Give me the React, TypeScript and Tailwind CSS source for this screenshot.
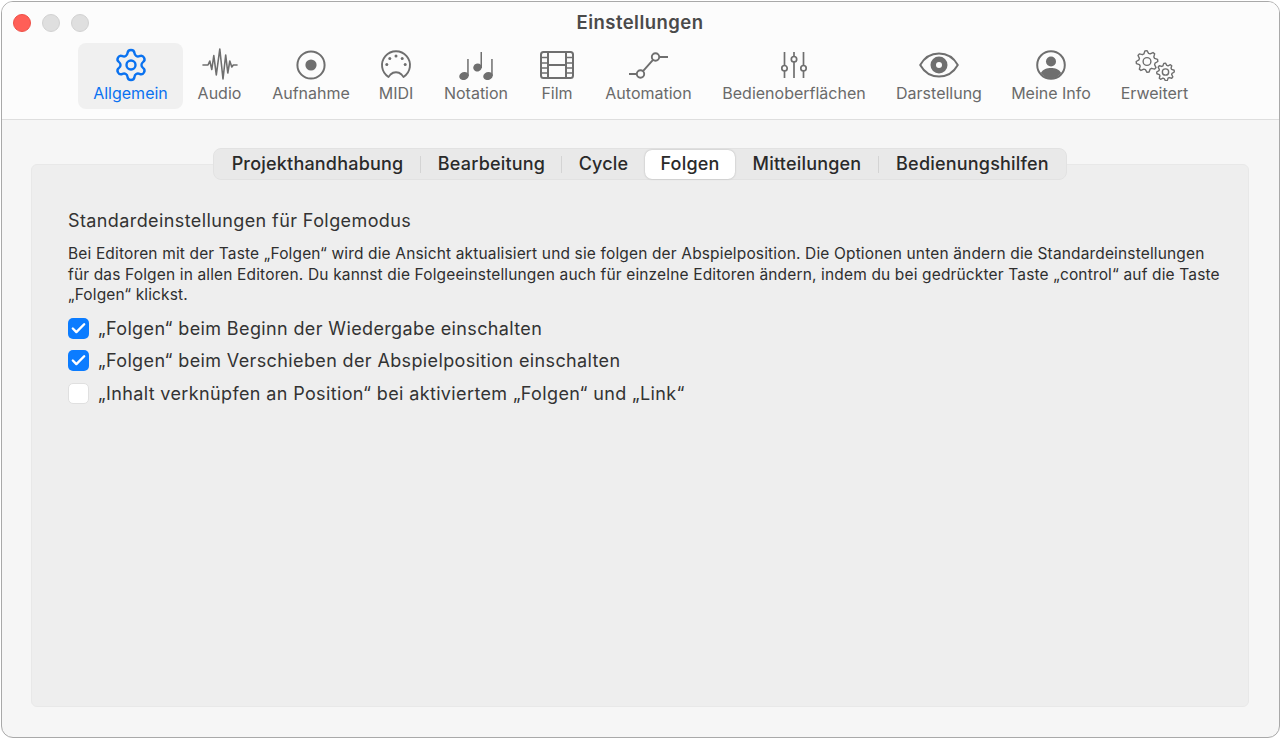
import React from "react";
import { Settings, Check } from "lucide-react";

const G = "#6f6f6f";

function Gear({ cx, cy, r }: { cx: number; cy: number; r: number }) {
  const teeth = 8;
  const pts: string[] = [];
  for (let i = 0; i < teeth * 4; i++) {
    const a = (i / (teeth * 4)) * Math.PI * 2 - Math.PI / 2 - Math.PI / 16;
    const rad = i % 4 === 0 || i % 4 === 1 ? r : r * 0.76;
    pts.push(`${(cx + Math.cos(a) * rad).toFixed(2)},${(cy + Math.sin(a) * rad).toFixed(2)}`);
  }
  return (
    <g fill="none" stroke={G} strokeWidth="1.4" strokeLinejoin="round">
      <polygon points={pts.join(" ")} />
      <circle cx={cx} cy={cy} r={r * 0.36} />
    </g>
  );
}

const Icons: Record<string, React.ReactNode> = {
  audio: (
    <svg width="36" height="34" viewBox="0 0 36 34" fill="none" stroke={G} strokeWidth="1.6" strokeLinejoin="round" strokeLinecap="round">
      <path d="M1 17H6L7.800 13 9.800 21.500 11.800 7.500 14.300 27 17.800 1 21 31 23.700 7 25.800 25 27.800 13 29.800 19 31.300 17H35" />
    </svg>
  ),
  rec: (
    <svg width="32" height="32" viewBox="0 0 32 32">
      <circle cx="16" cy="16" r="13.6" fill="none" stroke={G} strokeWidth="2" />
      <circle cx="16" cy="16" r="5.6" fill={G} />
    </svg>
  ),
  midi: (
    <svg width="32" height="32" viewBox="0 0 32 32" fill="none">
      <path d="M8.500 28A14 14 0 1 1 23.500 28L21.500 25.500A8 8 0 0 0 10.500 25.500Z" stroke={G} strokeWidth="1.900" strokeLinejoin="round" />
      <g fill={G}>
        <circle cx="16" cy="7" r="1.500" />
        <circle cx="9.800" cy="9.500" r="1.500" />
        <circle cx="22.200" cy="9.500" r="1.500" />
        <circle cx="6.800" cy="15.500" r="1.500" />
        <circle cx="25.200" cy="15.500" r="1.500" />
      </g>
    </svg>
  ),
  notes: (
    <svg width="36" height="32" viewBox="0 0 36 32" fill={G}>
      <ellipse cx="6" cy="27" rx="4.800" ry="4" transform="rotate(-20 6 27)" />
      <rect x="9.200" y="10" width="1.500" height="17" />
      <ellipse cx="19.500" cy="18.500" rx="4.300" ry="4" transform="rotate(-20 19.500 18.500)" />
      <rect x="22.500" y="3" width="1.500" height="16" />
      <ellipse cx="30" cy="27" rx="4.800" ry="4" transform="rotate(-20 30 27)" />
      <rect x="33.200" y="10" width="1.500" height="17" />
    </svg>
  ),
  film: (
    <svg width="34" height="28" viewBox="0 0 34 28" fill="none" stroke={G} strokeWidth="2">
      <rect x="1" y="1" width="32" height="26" rx="2.500" />
      <path d="M8 1v26M26 1v26M8 14h18" />
      <path d="M1 6.500h7M1 12h7M1 17h7M1 22h7M26 6.500h7M26 12h7M26 17h7M26 22h7" strokeWidth="1.500" />
    </svg>
  ),
  auto: (
    <svg width="40" height="28" viewBox="0 0 40 28" fill="none" stroke={G} strokeWidth="1.900">
      <circle cx="11.500" cy="23" r="3.700" />
      <circle cx="26.500" cy="6" r="3.700" />
      <path d="M0 23h7.800M14 20.200L24 8.800M30.200 6H39" />
    </svg>
  ),
  sliders: (
    <svg width="26" height="26" viewBox="0 0 26 26" fill="none" stroke={G} strokeWidth="1.700">
      <path d="M3.500 0v13.500M3.500 19v7M13 0v4.500M13 10v16M22.500 0v13.500M22.500 19v7" />
      <circle cx="3.500" cy="16.200" r="2.700" />
      <circle cx="13" cy="7.200" r="2.700" />
      <circle cx="22.500" cy="16.200" r="2.700" />
    </svg>
  ),
  eye: (
    <svg width="40" height="28" viewBox="0 0 40 28">
      <path d="M1.200 14C6 5.500 12.500 2.500 20 2.500s14 3 18.800 11.500C34 22.500 27.500 25.500 20 25.500S6 22.500 1.200 14Z" fill="none" stroke={G} strokeWidth="2" strokeLinejoin="round" />
      <circle cx="20" cy="14" r="8.500" fill={G} />
      <circle cx="20" cy="14" r="3" fill="#fcfcfc" />
    </svg>
  ),
  user: (
    <svg width="32" height="32" viewBox="0 0 32 32">
      <circle cx="16" cy="16" r="13.800" fill="none" stroke={G} strokeWidth="2" />
      <circle cx="16" cy="12.500" r="5" fill={G} />
      <path d="M5.800 24C8 20 12 19 16 19s8 1 10.200 5A13.800 13.800 0 0 1 16 29.500 13.800 13.800 0 0 1 5.800 24Z" fill={G} />
    </svg>
  ),
  gears: (
    <svg width="40" height="32" viewBox="0 0 40 32">
      <Gear cx={12} cy={12.500} r={10.800} />
      <Gear cx={30.500} cy={23} r={8.800} />
    </svg>
  ),
};

const tools = [
  { label: "Allgemein", w: 105, icon: "gear", active: true },
  { label: "Audio", w: 73, icon: "audio" },
  { label: "Aufnahme", w: 110, icon: "rec" },
  { label: "MIDI", w: 60, icon: "midi" },
  { label: "Notation", w: 100, icon: "notes" },
  { label: "Film", w: 62, icon: "film" },
  { label: "Automation", w: 121, icon: "auto" },
  { label: "Bedienoberflächen", w: 170, icon: "sliders" },
  { label: "Darstellung", w: 120, icon: "eye" },
  { label: "Meine Info", w: 104, icon: "user" },
  { label: "Erweitert", w: 103, icon: "gears" },
];

const tabs = [
  { label: "Projekthandhabung", w: 207, sep: true },
  { label: "Bearbeitung", w: 141, sep: true },
  { label: "Cycle", w: 83 },
  { label: "Folgen", w: 90, active: true },
  { label: "Mitteilungen", w: 144, sep: true },
  { label: "Bedienungshilfen", w: 187 },
];

const checks = [
  { label: "„Folgen“ beim Beginn der Wiedergabe einschalten", on: true },
  { label: "„Folgen“ beim Verschieben der Abspielposition einschalten", on: true },
  { label: "„Inhalt verknüpfen an Position“ bei aktiviertem „Folgen“ und „Link“", on: false },
];

export default function App() {
  return (
    <div className="w-[1282px] h-[739px] bg-white p-px font-['Inter','Liberation_Sans',sans-serif] overflow-hidden">
      <div className="w-[1279px] h-[737px] rounded-[12px] border border-[#a9a9a9] bg-[#f6f6f6] overflow-hidden flex flex-col">
        <header className="h-[118px] shrink-0 bg-[#fcfcfc] border-b border-[#dedede] flex flex-col">
          <div className="relative h-[41px] shrink-0 flex items-center justify-center pr-[1px]">
            <div className="absolute left-[11px] top-[12px] flex gap-[11px]">
              <span className="w-[18px] h-[18px] rounded-full bg-[#ff5f57] border border-[#ee5048]" />
              <span className="w-[18px] h-[18px] rounded-full bg-[#dfdfdf] border border-[#d2d2d2]" />
              <span className="w-[18px] h-[18px] rounded-full bg-[#dfdfdf] border border-[#d2d2d2]" />
            </div>
            <h1 className="text-[18.5px] font-semibold text-[#4a4a4a] tracking-[0.45px]">Einstellungen</h1>
          </div>
          <nav className="flex pl-[76px]">
            {tools.map((t) => (
              <div
                key={t.label}
                style={{ width: t.w }}
                className={`h-[66px] shrink-0 rounded-[8px] flex flex-col items-center ${t.active ? "bg-[#f0f0f0]" : ""}`}
              >
                <div className="h-[36px] mt-[4px] w-full flex items-center justify-center">
                  {t.icon === "gear" ? (
                    <Settings size={36} strokeWidth={1.6} color="#0a72f0" />
                  ) : (
                    Icons[t.icon]
                  )}
                </div>
                <span
                  className={`text-[16px] leading-[20px] whitespace-nowrap ${
                    t.active ? "text-[#0a72f0]" : "text-[#6a6a6a]"
                  }`}
                >
                  {t.label}
                </span>
              </div>
            ))}
          </nav>
        </header>

        <main className="flex-1 flex flex-col pl-[29px] pr-[30px] pt-[28px] pb-[30px]">
          <div className="relative z-10 self-center -mb-[16px] h-[32px] w-[854px] rounded-[8px] bg-[#e9e9e9] border border-[#e2e2e2] flex items-center">
            {tabs.map((t) => (
              <div
                key={t.label}
                style={{ width: t.w }}
                className={`relative h-[29px] shrink-0 flex items-center justify-center pb-[2px] text-[18px] tracking-[0.2px] font-medium whitespace-nowrap text-[#2a2a2a] ${
                  t.active ? "bg-white rounded-[7px] shadow-[0_0_2px_rgba(0,0,0,0.25)]" : ""
                }`}
              >
                {t.label}
                {t.sep && <span className="absolute right-0 top-[6px] h-[17px] w-px bg-[#d4d4d4]" />}
              </div>
            ))}
          </div>
          <section className="flex-1 rounded-[6px] bg-[#eeeeee] border border-[#e8e8e8] pl-[36px] pt-[45px]">
            <h2 className="text-[18px] tracking-[0.4px] leading-[22px] text-[#333333]">Standardeinstellungen für Folgemodus</h2>
            <p className="mt-[12px] text-[15.5px] tracking-[0.15px] leading-[20.5px] text-[#2f2f2f] whitespace-nowrap">
              Bei Editoren mit der Taste „Folgen“ wird die Ansicht aktualisiert und sie folgen der Abspielposition. Die Optionen unten ändern die Standardeinstellungen
              <br />
              für das Folgen in allen Editoren. Du kannst die Folgeeinstellungen auch für einzelne Editoren ändern, indem du bei gedrückter Taste „control“ auf die Taste
              <br />
              „Folgen“ klickst.
            </p>
            <ul className="mt-[12px] flex flex-col gap-[11.5px]">
              {checks.map((c) => (
                <li key={c.label} className="flex items-center h-[21px] gap-[9px]">
                  <span
                    className={`w-[21px] h-[21px] rounded-[5px] flex items-center justify-center ${
                      c.on ? "bg-[#0b7cff]" : "bg-white border border-[#e0e0e0]"
                    }`}
                  >
                    {c.on && <Check size={17} strokeWidth={3.4} color="#ffffff" />}
                  </span>
                  <span className="text-[18px] tracking-[0.37px] text-[#333333] whitespace-nowrap">{c.label}</span>
                </li>
              ))}
            </ul>
          </section>
        </main>
      </div>
    </div>
  );
}
